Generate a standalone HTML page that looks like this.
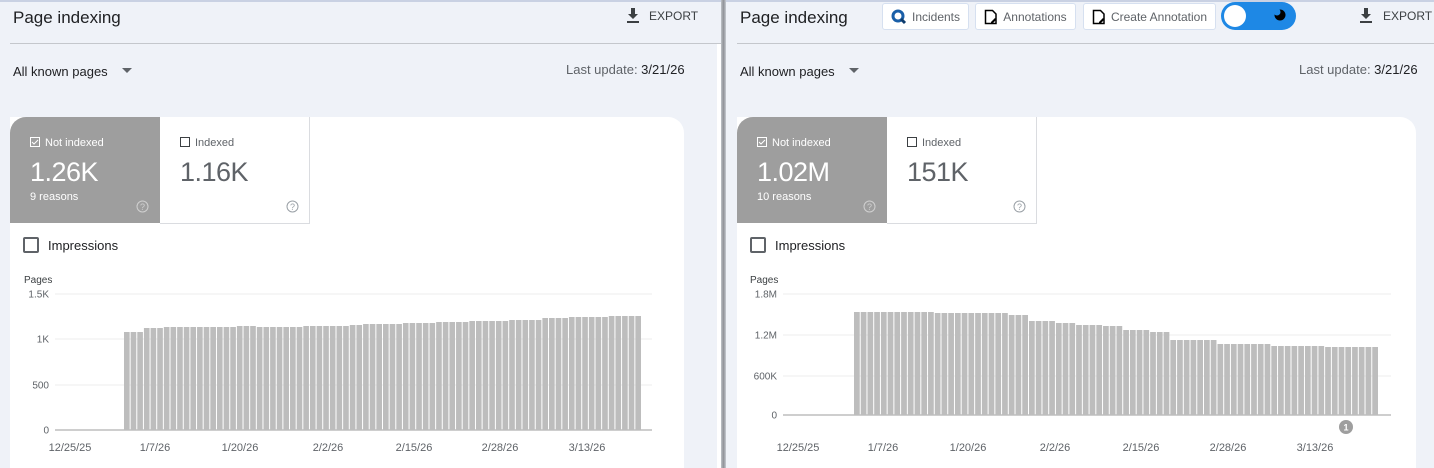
<!DOCTYPE html>
<html><head><meta charset="utf-8">
<style>
*{margin:0;padding:0;box-sizing:border-box}
body{width:1434px;height:468px;overflow:hidden;background:#eff2f8;font-family:"Liberation Sans",sans-serif;position:relative;color:#202124}
.a{position:absolute}
.t{font-size:17px;color:#202124}
.hl{height:1px;background:#c4c7cc}
.card{background:#fff;border-radius:0 16px 0 0}
.tile1{background:#9e9e9e;color:#fff;border-radius:16px 0 0 0}
.tile2{background:#fff;border-right:1px solid #dadce0;border-bottom:1px solid #dadce0}
.lbl{font-size:11px}
.num{font-size:27px;letter-spacing:-0.5px}
.btn{border:1px solid #d6e0f0;background:#fff;border-radius:3px;font-size:12px;color:#5f6368;display:flex;align-items:center;justify-content:center;gap:5px}
</style></head><body>
<div class="a" style="left:0;top:0;width:1434px;height:2px;background:#c9d1e3"></div>
<div class="a" style="left:721px;top:0;width:5px;height:468px;background:linear-gradient(90deg,#bfc3c8,#8e9196,#c8ccd2)"></div>
<div class="a" style="left:717px;top:44px;width:4px;height:424px;background:#fff"></div>

<!-- LEFT -->
<div class="a t" style="left:13px;top:8px">Page indexing</div>
<svg class="a" style="left:626px;top:8px" width="14" height="16" viewBox="0 0 14 16"><path d="M5 0h4v6h3l-5 5-5-5h3z M1 13h12v2H1z" fill="#3c4043"/></svg>
<div class="a" style="left:649px;top:9px;font-size:12px;color:#3c4043">EXPORT</div>
<div class="a hl" style="left:10px;top:43px;width:711px"></div>
<div class="a" style="left:13px;top:64px;font-size:13px">All known pages</div>
<svg class="a" style="left:122px;top:68px" width="10" height="6"><path d="M0 0h10L5 5z" fill="#5f6368"/></svg>
<div class="a" style="left:566px;top:62px;font-size:13px;color:#5f6368">Last update: <span style="color:#202124">3/21/26</span></div>

<div class="a card" style="left:10px;top:117px;width:674px;height:351px"></div>
<div class="a tile1" style="left:10px;top:117px;width:150px;height:106px">
 <div class="a lbl" style="left:20px;top:20px"><svg width="10" height="10" style="vertical-align:-1px;margin-right:5px"><rect x=".5" y=".5" width="9" height="9" fill="none" stroke="#fff"/><path d="M2 5l2 2 4-4" stroke="#fff" fill="none"/></svg>Not indexed</div>
 <div class="a num" style="left:20px;top:40px">1.26K</div>
 <div class="a lbl" style="left:20px;top:74px">9 reasons</div>
 <svg class="a" style="left:126px;top:83px" width="13" height="13"><circle cx="6.5" cy="6.5" r="5.5" fill="none" stroke="#d0d0d0"/><text x="6.5" y="10" font-size="9" text-anchor="middle" fill="#d0d0d0" font-family="Liberation Sans">?</text></svg>
</div>
<div class="a tile2" style="left:160px;top:117px;width:150px;height:107px">
 <div class="a lbl" style="left:20px;top:20px;color:#5f6368"><svg width="10" height="10" style="vertical-align:-1px;margin-right:5px"><rect x=".5" y=".5" width="9" height="9" fill="none" stroke="#3c4043"/></svg>Indexed</div>
 <div class="a num" style="left:20px;top:40px;color:#5f6368">1.16K</div>
 <svg class="a" style="left:126px;top:83px" width="13" height="13"><circle cx="6.5" cy="6.5" r="5.5" fill="none" stroke="#9aa0a6"/><text x="6.5" y="10" font-size="9" text-anchor="middle" fill="#9aa0a6" font-family="Liberation Sans">?</text></svg>
</div>
<svg class="a" style="left:23px;top:237px" width="16" height="16"><rect x="1" y="1" width="14" height="14" rx="1" fill="none" stroke="#5f6368" stroke-width="2"/></svg>
<div class="a" style="left:48px;top:238px;font-size:13px">Impressions</div>
<svg class="a" id="c1" style="left:0;top:270px" width="720" height="198"></svg>

<!-- RIGHT -->
<div class="a t" style="left:740px;top:8px">Page indexing</div>
<div class="a btn" style="left:882px;top:3px;width:87px;height:27px"><svg width="16" height="16"><circle cx="7" cy="7" r="5" fill="none" stroke="#1a5fa8" stroke-width="3"/><path d="M10 10l4 4" stroke="#0d3c6e" stroke-width="3"/></svg>Incidents</div>
<div class="a btn" style="left:975px;top:3px;width:101px;height:27px"><svg width="14" height="16"><path d="M1.5 1.5h7l3.5 3.5v9.5h-10.5z" fill="none" stroke="#000" stroke-width="1.5"/><path d="M7 13l4-4 1.5 1.5-4 4H7z" fill="#000"/></svg>Annotations</div>
<div class="a btn" style="left:1083px;top:3px;width:133px;height:27px"><svg width="14" height="16"><path d="M1.5 1.5h7l3.5 3.5v9.5h-10.5z" fill="none" stroke="#000" stroke-width="1.5"/><path d="M7 13l4-4 1.5 1.5-4 4H7z" fill="#000"/></svg>Create Annotation</div>
<div class="a" style="left:1221px;top:2px;width:75px;height:28px;border-radius:14px;background:#1e88e5"></div>
<div class="a" style="left:1224px;top:5px;width:22px;height:22px;border-radius:50%;background:#fff"></div>
<svg class="a" style="left:1274px;top:9px" width="12" height="12"><circle cx="6" cy="6" r="5.5" fill="#000"/><circle cx="3" cy="3" r="3.5" fill="#1e88e5"/></svg>
<svg class="a" style="left:1359px;top:8px" width="14" height="16" viewBox="0 0 14 16"><path d="M5 0h4v6h3l-5 5-5-5h3z M1 13h12v2H1z" fill="#3c4043"/></svg>
<div class="a" style="left:1383px;top:9px;font-size:12px;color:#3c4043">EXPORT</div>
<div class="a hl" style="left:737px;top:43px;width:697px"></div>
<div class="a" style="left:740px;top:64px;font-size:13px">All known pages</div>
<svg class="a" style="left:849px;top:68px" width="10" height="6"><path d="M0 0h10L5 5z" fill="#5f6368"/></svg>
<div class="a" style="left:1299px;top:62px;font-size:13px;color:#5f6368">Last update: <span style="color:#202124">3/21/26</span></div>

<div class="a card" style="left:737px;top:117px;width:679px;height:351px"></div>
<div class="a tile1" style="left:737px;top:117px;width:150px;height:106px">
 <div class="a lbl" style="left:20px;top:20px"><svg width="10" height="10" style="vertical-align:-1px;margin-right:5px"><rect x=".5" y=".5" width="9" height="9" fill="none" stroke="#fff"/><path d="M2 5l2 2 4-4" stroke="#fff" fill="none"/></svg>Not indexed</div>
 <div class="a num" style="left:20px;top:40px">1.02M</div>
 <div class="a lbl" style="left:20px;top:74px">10 reasons</div>
 <svg class="a" style="left:126px;top:83px" width="13" height="13"><circle cx="6.5" cy="6.5" r="5.5" fill="none" stroke="#d0d0d0"/><text x="6.5" y="10" font-size="9" text-anchor="middle" fill="#d0d0d0" font-family="Liberation Sans">?</text></svg>
</div>
<div class="a tile2" style="left:887px;top:117px;width:150px;height:107px">
 <div class="a lbl" style="left:20px;top:20px;color:#5f6368"><svg width="10" height="10" style="vertical-align:-1px;margin-right:5px"><rect x=".5" y=".5" width="9" height="9" fill="none" stroke="#3c4043"/></svg>Indexed</div>
 <div class="a num" style="left:20px;top:40px;color:#5f6368">151K</div>
 <svg class="a" style="left:126px;top:83px" width="13" height="13"><circle cx="6.5" cy="6.5" r="5.5" fill="none" stroke="#9aa0a6"/><text x="6.5" y="10" font-size="9" text-anchor="middle" fill="#9aa0a6" font-family="Liberation Sans">?</text></svg>
</div>
<svg class="a" style="left:750px;top:237px" width="16" height="16"><rect x="1" y="1" width="14" height="14" rx="1" fill="none" stroke="#5f6368" stroke-width="2"/></svg>
<div class="a" style="left:775px;top:238px;font-size:13px">Impressions</div>
<svg class="a" id="c2" style="left:720px;top:270px" width="714" height="198"></svg>

<script>
function chart(id,o){
 var s='';
 s+='<text x="'+o.px+'" y="13" font-size="10" fill="#3c4043" font-family="Liberation Sans">Pages</text>';
 for(var i=0;i<o.grid.length;i++){var g=o.grid[i];
  s+='<line x1="'+o.gx1+'" x2="'+o.gx2+'" y1="'+g[0]+'" y2="'+g[0]+'" stroke="'+(i==o.grid.length-1?'#9e9e9e':'#ececec')+'"/>';
  s+='<text x="'+(o.gx1-6)+'" y="'+(g[0]+3.5)+'" font-size="10" fill="#5f6368" text-anchor="end" font-family="Liberation Sans">'+g[1]+'</text>';}
 var tops=[];o.seg.forEach(function(p){for(var k=0;k<p[1];k++)tops.push(p[0]);});
 var n=tops.length,step=(o.b2-o.b1)/n,base=o.grid[o.grid.length-1][0];
 for(var j=0;j<n;j++){s+='<rect x="'+(o.b1+j*step).toFixed(2)+'" y="'+tops[j]+'" width="'+(step-1).toFixed(2)+'" height="'+(base-tops[j])+'" fill="#bdbdbd"/>';}
 o.dates.forEach(function(d){s+='<text x="'+d[0]+'" y="181" font-size="11" fill="#5f6368" text-anchor="middle" font-family="Liberation Sans">'+d[1]+'</text>';});
 if(o.extra)s+=o.extra;
 document.getElementById(id).innerHTML=s;
}
chart('c1',{px:24,gx1:55,gx2:652,b1:124,b2:642,
 grid:[[24,'1.5K'],[69,'1K'],[115,'500'],[160,'0']],
 seg:[[62,3],[58,3],[57,11],[56,3],[57,7],[56,7],[55,2],[54,6],[53,5],[52,5],[51,6],[50,5],[48,4],[47,6],[46,2],[46,3]],
 dates:[[70,'12/25/25'],[155,'1/7/26'],[240,'1/20/26'],[328,'2/2/26'],[414,'2/15/26'],[500,'2/28/26'],[587,'3/13/26']]});
chart('c2',{px:30,gx1:63,gx2:671,b1:134,b2:659,
 grid:[[24,'1.8M'],[65,'1.2M'],[106,'600K'],[145,'0']],
 seg:[[42,12],[43,11],[45,3],[51,4],[53,3],[55,4],[56,3],[60,4],[62,3],[70,7],[74,8],[76,8],[77,8]],
 dates:[[78,'12/25/25'],[163,'1/7/26'],[248,'1/20/26'],[335,'2/2/26'],[421,'2/15/26'],[508,'2/28/26'],[595,'3/13/26']],
 extra:'<circle cx="626" cy="157" r="7" fill="#9e9e9e"/><text x="626" y="160.5" font-size="9" fill="#fff" text-anchor="middle" font-weight="bold" font-family="Liberation Sans">1</text>'});
</script>
</body></html>
